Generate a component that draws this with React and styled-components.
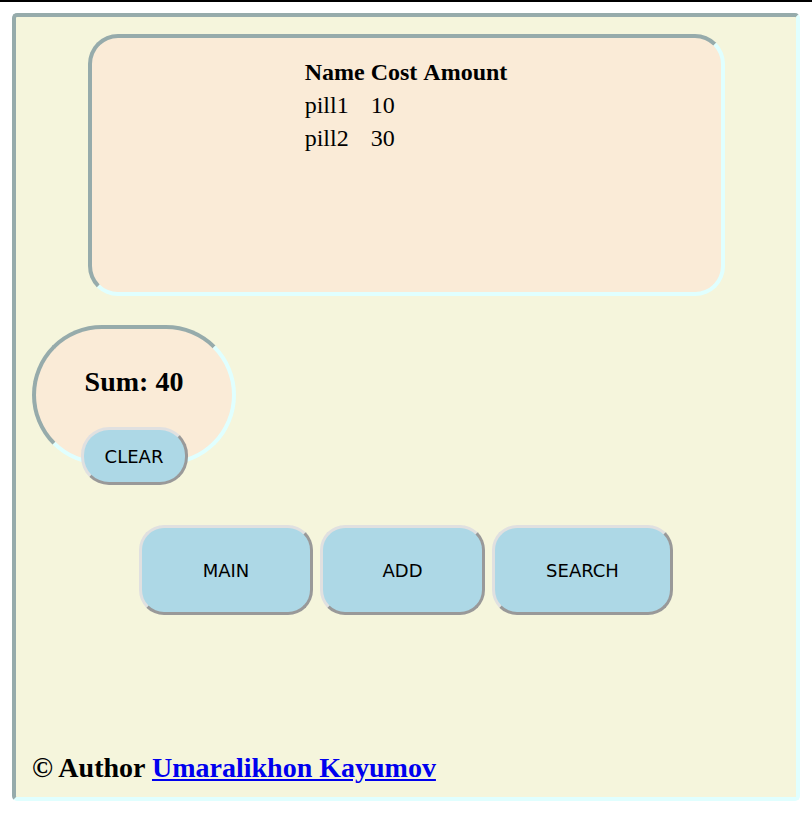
import styled, { createGlobalStyle } from "styled-components";

const GlobalStyle = createGlobalStyle`
  body {
    margin: 0;
    font-family: "Liberation Serif", "Times New Roman", serif;
    background: #fff;
  }
`;

const pills = [
  { name: "pill1", cost: 10 },
  { name: "pill2", cost: 30 },
];

function App() {
  const sum = pills.reduce((acc, p) => acc + p.cost, 0);
  return (
    <>
      <GlobalStyle />
      <TopRule />
      <Wrapper>
        <ListBox>
          <PillTable>
            <thead>
              <tr>
                <th>Name</th>
                <th>Cost</th>
                <th>Amount</th>
              </tr>
            </thead>
            <tbody>
              {pills.map((p) => (
                <tr key={p.name}>
                  <td>{p.name}</td>
                  <td>{p.cost}</td>
                  <td></td>
                </tr>
              ))}
            </tbody>
          </PillTable>
        </ListBox>

        <SumOval>
          <SumTitle>Sum: {sum}</SumTitle>
          <ClearButton>CLEAR</ClearButton>
        </SumOval>

        <Nav>
          <NavButton $w={174}>MAIN</NavButton>
          <NavButton $w={165}>ADD</NavButton>
          <NavButton $w={181}>SEARCH</NavButton>
        </Nav>

        <Footer>
          © Author <a href="#">Umaralikhon Kayumov</a>
        </Footer>
      </Wrapper>
    </>
  );
}

export default App;

const TopRule = styled.div`
  height: 2px;
  background: #000;
`;

const Wrapper = styled.div`
  margin: 11px 0 0 12px;
  width: 788px;
  height: 788px;
  box-sizing: border-box;
  border: 4px inset lightcyan;
  border-radius: 5px;
  background-color: beige;
  display: flex;
  flex-direction: column;
`;

const ListBox = styled.div`
  width: 637px;
  height: 262px;
  box-sizing: border-box;
  margin: 17px auto 0;
  padding-top: 17px;
  border: 4px inset lightcyan;
  border-radius: 30px;
  background-color: antiquewhite;
`;

const PillTable = styled.table`
  margin: 0 auto;
  border-spacing: 2px;
  font-size: 24px;
  th,
  td {
    padding: 2px;
    text-align: left;
  }
`;

const SumOval = styled.div`
  width: 204px;
  height: 140px;
  box-sizing: border-box;
  margin: 29px 0 0 16px;
  padding-top: 37px;
  border: 4px inset lightcyan;
  border-radius: 70px;
  background-color: antiquewhite;
  display: flex;
  flex-direction: column;
  align-items: center;
`;

const SumTitle = styled.h2`
  margin: 0;
  font-size: 28px;
  font-weight: bold;
`;

const buttonBase = `
  box-sizing: border-box;
  flex-shrink: 0;
  background-color: lightblue;
  border: 3px solid;
  border-color: #e0e0e0 #999 #999 #e0e0e0;
  font-family: "DejaVu Sans", Verdana, sans-serif;
  font-size: 18px;
  color: #000;
  cursor: pointer;
`;

const ClearButton = styled.button`
  ${buttonBase}
  width: 107px;
  height: 58px;
  margin-top: 29px;
  border-radius: 28px;
`;

const Nav = styled.nav`
  display: flex;
  justify-content: center;
  gap: 7px;
  margin-top: 60px;
`;

const NavButton = styled.button`
  ${buttonBase}
  width: ${(p) => p.$w}px;
  height: 90px;
  border-radius: 25px;
`;

const Footer = styled.p`
  margin: auto 0 13px;
  padding: 0 16px;
  font-size: 28px;
  font-weight: bold;
  a {
    color: #0000ee;
  }
`;
